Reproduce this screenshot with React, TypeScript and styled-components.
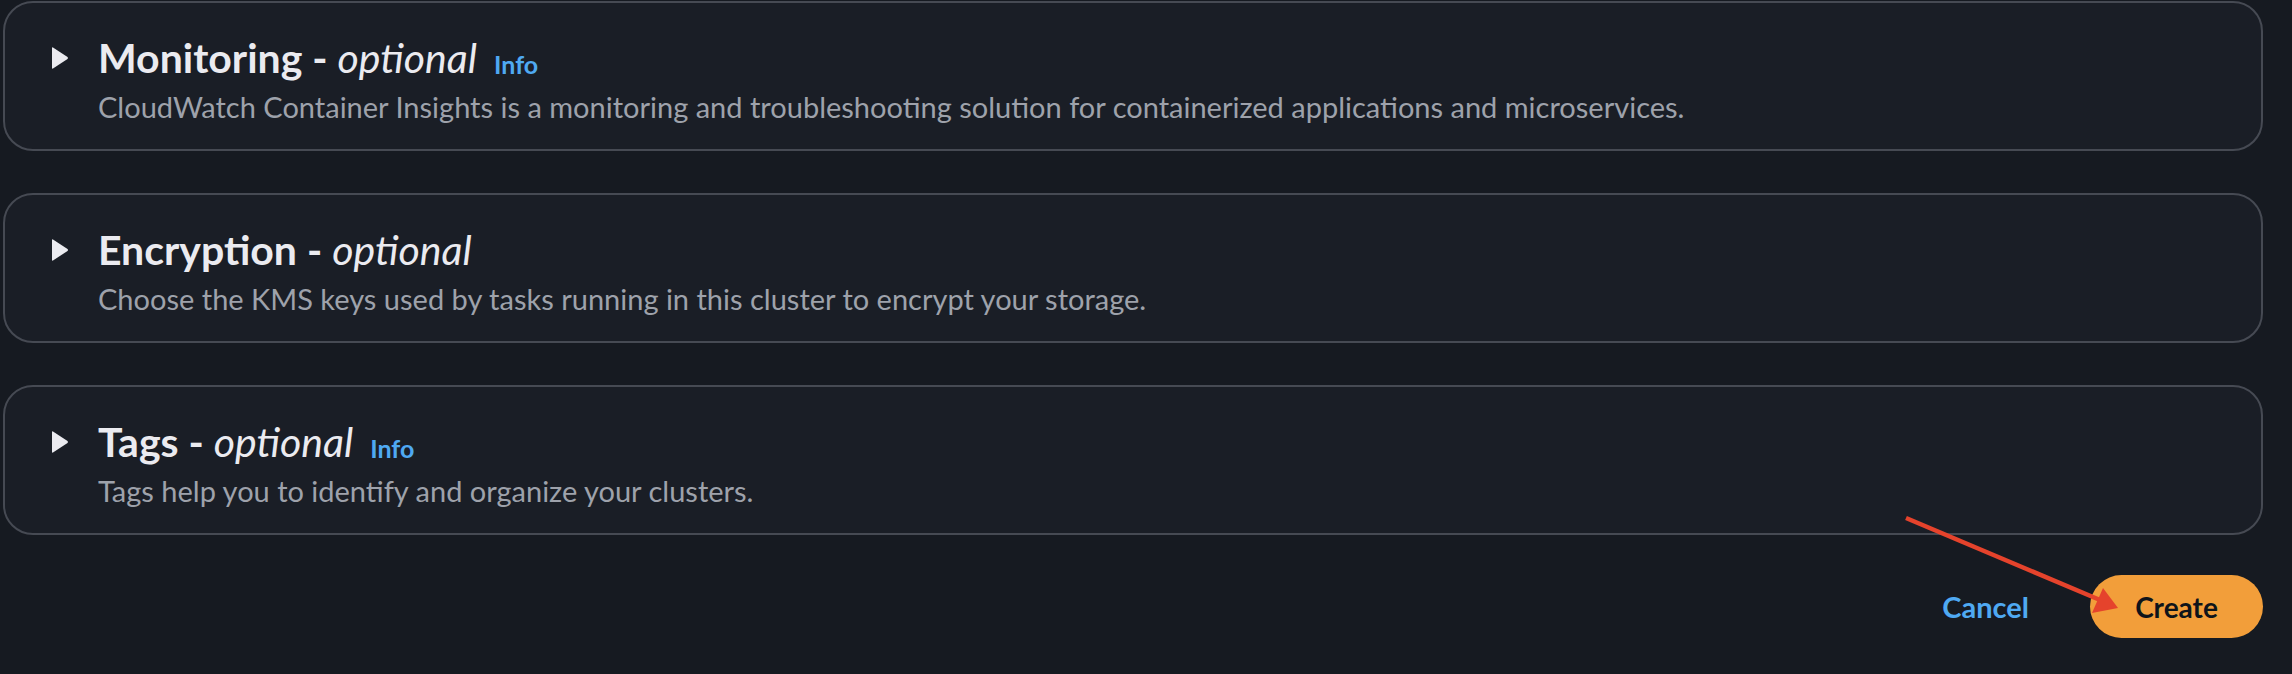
import React from "react";
import styled, { createGlobalStyle } from "styled-components";

const GlobalStyle = createGlobalStyle`
  html, body {
    margin: 0;
    padding: 0;
    background: #161a21;
  }
  body {
    font-family: Lato, "Open Sans", sans-serif;
    -webkit-font-smoothing: antialiased;
  }
`;

const Page = styled.div`
  position: relative;
  width: 2292px;
  height: 674px;
  box-sizing: border-box;
  padding: 1px 29px 0 3px;
  background: #161a21;
  overflow: hidden;
`;

const Stack = styled.div`
  display: flex;
  flex-direction: column;
  gap: 42px;
`;

const Card = styled.section`
  box-sizing: border-box;
  height: 150px;
  border: 2px solid #464a53;
  border-radius: 30px;
  background: #1a1e26;
  padding: 32px 40px 0 46px;
`;

const HeaderRow = styled.div`
  display: flex;
  align-items: center;
  height: 46px;
`;

const Caret = styled.svg`
  width: 18px;
  height: 24px;
  flex: none;
  margin-right: 29px;
`;

const Title = styled.h2`
  margin: 0;
  font-family: Lato, "Open Sans", sans-serif;
  font-size: 41px;
  line-height: 46px;
  font-weight: 700;
  color: #ebebf0;
  white-space: nowrap;
`;

const Optional = styled.i`
  font-weight: 400;
  font-style: italic;
`;

const Info = styled.a`
  margin-left: 17px;
  align-self: flex-end;
  margin-bottom: 3px;
  font-size: 25px;
  line-height: 28px;
  font-weight: 700;
  color: #4fa9f2;
  text-decoration: none;
  cursor: pointer;
`;

const Description = styled.p`
  margin: 8px 0 0 47px;
  font-size: 29px;
  line-height: 36px;
  color: #9ea2ab;
  white-space: nowrap;
`;

const Footer = styled.div`
  display: flex;
  justify-content: flex-end;
  align-items: center;
  gap: 37px;
  margin-top: 40px;
`;

const LinkButton = styled.button`
  background: none;
  border: none;
  padding: 0 24px;
  height: 63px;
  font-family: Lato, "Open Sans", sans-serif;
  font-size: 29px;
  font-weight: 700;
  color: #4fa9f2;
  cursor: pointer;
`;

const PrimaryButton = styled.button`
  box-sizing: border-box;
  width: 173px;
  height: 63px;
  border: none;
  border-radius: 32px;
  background: #f29e3a;
  font-family: Lato, "Open Sans", sans-serif;
  font-size: 28px;
  font-weight: 700;
  color: #0f141a;
  cursor: pointer;
`;

const Annotation = styled.svg`
  position: absolute;
  left: 0;
  top: 0;
  width: 2292px;
  height: 674px;
  pointer-events: none;
`;

type Section = { title: string; info: boolean; description: string };

const sections: Section[] = [
  {
    title: "Monitoring",
    info: true,
    description:
      "CloudWatch Container Insights is a monitoring and troubleshooting solution for containerized applications and microservices.",
  },
  {
    title: "Encryption",
    info: false,
    description:
      "Choose the KMS keys used by tasks running in this cluster to encrypt your storage.",
  },
  {
    title: "Tags",
    info: true,
    description: "Tags help you to identify and organize your clusters.",
  },
];

export default function App() {
  return (
    <>
      <GlobalStyle />
      <Page>
        <Stack>
          {sections.map((s) => (
            <Card key={s.title}>
              <HeaderRow>
                <Caret viewBox="0 0 18 24">
                  <path
                    d="M2 1.5 L16.5 11 Q17.5 12 16.5 13 L2 22.5 Q1 23 1 22 L1 2 Q1 1 2 1.5 Z"
                    fill="#ebebf0"
                  />
                </Caret>
                <Title>
                  {s.title} - <Optional>optional</Optional>
                </Title>
                {s.info && <Info>Info</Info>}
              </HeaderRow>
              <Description>{s.description}</Description>
            </Card>
          ))}
        </Stack>
        <Footer>
          <LinkButton>Cancel</LinkButton>
          <PrimaryButton>Create</PrimaryButton>
        </Footer>
        <Annotation viewBox="0 0 2292 674">
          <line
            x1="1906"
            y1="518"
            x2="2100"
            y2="600"
            stroke="#e5432c"
            strokeWidth="4.5"
            strokeLinecap="butt"
          />
          <polygon points="2103,588 2118,608 2092,613" fill="#e5432c" />
        </Annotation>
      </Page>
    </>
  );
}
